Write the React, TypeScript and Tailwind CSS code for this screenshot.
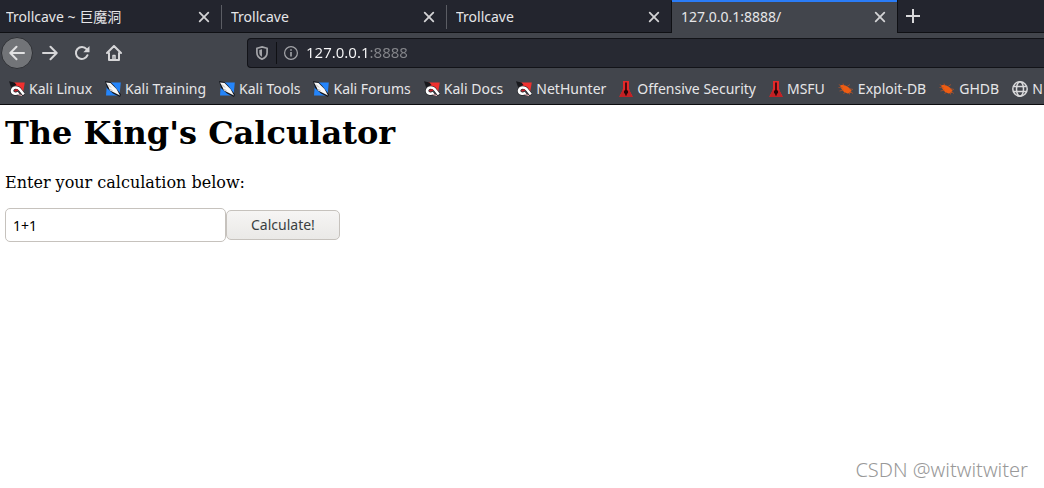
import React, { useState } from 'react';

type BookmarkIcon = 'magnet' | 'dragon' | 'tower' | 'bug' | 'globe';

const tabs = ['Trollcave ~ 巨魔洞', 'Trollcave', 'Trollcave', '127.0.0.1:8888/'];

const tabStyles = [
  'w-[222px] border-b border-[#0f1014] pt-px pl-[6px]',
  'w-[225px] border-b border-[#0f1014] pt-px pl-[9px]',
  'w-[225px] border-b border-[#0f1014] pt-px pl-[9px]',
  'w-[225px] border-t-2 border-[#2a7cf7] bg-[#42454c] pb-px pl-[9px]',
];

const bookmarks: { label: string; icon: BookmarkIcon }[] = [
  { label: 'Kali Linux', icon: 'magnet' },
  { label: 'Kali Training', icon: 'dragon' },
  { label: 'Kali Tools', icon: 'dragon' },
  { label: 'Kali Forums', icon: 'dragon' },
  { label: 'Kali Docs', icon: 'magnet' },
  { label: 'NetHunter', icon: 'magnet' },
  { label: 'Offensive Security', icon: 'tower' },
  { label: 'MSFU', icon: 'tower' },
  { label: 'Exploit-DB', icon: 'bug' },
  { label: 'GHDB', icon: 'bug' },
  { label: 'N', icon: 'globe' },
];

const MagnetIcon = () => (
  <svg className="size-4 shrink-0" viewBox="0 0 16 16">
    <path d="M3.500 1.500H15.800L14 11.500 9 8z" fill="#f0302f" />
    <path d="M0 .3L5.500 1.500 7.500 4 2 6z" fill="#17181c" />
    <path d="M15 14L11.500 9.500C9.500 5.500 4 5.500 3 9.300c-.2 3.600 4 4.300 6.500 2.400" fill="none" stroke="#17181c" strokeWidth="3.600" />
    <path d="M14.800 13.500L11.300 9C9 5.600 4 5.500 3 9.300c-.2 3.600 4 4.300 6.500 2.400" fill="none" stroke="#fff" strokeWidth="2.600" />
    <path d="M5.500 9.800L9 8.800" stroke="#c51f28" strokeWidth="1.800" />
    <path d="M9 13.500l4 1" stroke="#f3b7ba" strokeWidth="1" />
  </svg>
);

const DragonIcon = () => (
  <svg className="size-4 shrink-0" viewBox="0 0 16 16">
    <path d="M2 1.500H15.800L14.500 14.500H1z" fill="#2485fb" />
    <path d="M0 0L5.500 1 9 4.500 16 13.500 15 16 8 12.500 2 7z" fill="#15171d" />
    <path d="M1 1.500L5.500 2 8.500 5 11.500 8 15 14.500 9 11.500 5 9.500 3.500 6z" fill="#f8f8f8" />
    <path d="M3 3.500l3 3M5 8.500l2.500 1" stroke="#9da2aa" strokeWidth="0.800" />
  </svg>
);

const TowerIcon = () => (
  <svg className="w-[14px] h-4 shrink-0" viewBox="0 0 14 16">
    <path d="M4 0h6v7.500l1 3L13.500 15v1H.5v-1L3 10.500l1-3z" fill="#e3282a" />
    <path d="M3 10.500L7 8l4 2.500 2.500 5.500H.5z" fill="#c42024" />
    <path d="M6.200 1.500h1.600V9l1.200 1v2l-1.200 1v1.500H6.200V13L5 12v-2l1.200-1z" fill="#260608" />
  </svg>
);

const BugIcon = () => (
  <svg className="size-4 shrink-0" viewBox="0 0 16 16">
    <path d="M2 4.500L4.500 3.700 8 4.700 11.500 7 13.500 9.500 12.500 12 9.500 12.500 6 11 3.500 8z" fill="#ee5c12" />
    <path
      d="M.5 6.500l4 .3M1.500 10l4-1M5.500 13l1.500-2M11.500 13.500V11M12 10.500l3 2M11 7.500l4 1M9 5.500l3-2M6 4.500L5 2.500M3 5L.8 3.500"
      stroke="#a9502b"
      strokeWidth="0.800"
    />
  </svg>
);

const GlobeIcon = () => (
  <svg className="size-4 shrink-0" viewBox="0 0 16 16" fill="none" stroke="#d8d8da" strokeWidth="1.500">
    <circle cx="8" cy="8" r="7.200" />
    <ellipse cx="8" cy="8" rx="3.500" ry="7.200" />
    <path d="M1.500 5.500h13M1.500 10.500h13" />
  </svg>
);

const bookmarkIcons: Record<BookmarkIcon, React.FC> = {
  magnet: MagnetIcon,
  dragon: DragonIcon,
  tower: TowerIcon,
  bug: BugIcon,
  globe: GlobeIcon,
};

const CloseIcon = () => (
  <svg className="size-3" viewBox="0 0 12 12" fill="none" stroke="#d3d3d5" strokeWidth="1.800" strokeLinecap="round">
    <path d="M1.700 1.700l8.600 8.600M10.300 1.700l-8.600 8.600" />
  </svg>
);

const TabStrip: React.FC = () => (
  <div className="flex h-[33px] bg-[#23252e]">
    {tabs.map((title, i) => (
      <div key={i} className={`flex shrink-0 items-center ${tabStyles[i]}`}>
        <button className="grow truncate text-left">{title}</button>
        <button aria-label="Close tab" className="pr-[11px]">
          <CloseIcon />
        </button>
        {i < 2 && <span className="h-6 w-px bg-[#5b5d64]" />}
        {i === 2 && <span className="h-full w-px bg-[#0f1014]" />}
      </div>
    ))}
    <div className="flex grow items-center border-b border-l border-[#0f1014] pl-2">
      <button aria-label="New tab">
        <svg className="size-[14px]" viewBox="0 0 14 14" stroke="#d8d8da" strokeWidth="2">
          <path d="M7 0v14M0 7h14" />
        </svg>
      </button>
    </div>
  </div>
);

const NavBar: React.FC = () => (
  <div className="flex h-10 items-center bg-[#42454c]">
    <button
      aria-label="Back"
      className="ml-px flex size-8 shrink-0 items-center justify-center rounded-full border border-[#2f3136] bg-[#727478]"
    >
      <svg className="size-4" viewBox="0 0 16 16" fill="none" stroke="#e2e2e3" strokeWidth="2" strokeLinecap="round" strokeLinejoin="round">
        <path d="M15 8H1.500M7.500 1.800L1.300 8l6.200 6.200" />
      </svg>
    </button>
    <div className="flex w-[214px] shrink-0 gap-4 pl-[9px]">
      <button aria-label="Forward">
        <svg className="size-4" viewBox="0 0 16 16" fill="none" stroke="#d6d6d8" strokeWidth="2" strokeLinecap="round" strokeLinejoin="round">
          <path d="M1 8h13.500M8.500 1.800L14.700 8l-6.200 6.200" />
        </svg>
      </button>
      <button aria-label="Reload">
        <svg className="size-4" viewBox="0 0 16 16" fill="none" stroke="#d6d6d8" strokeWidth="2" strokeLinecap="round">
          <path d="M13.500 10.200A6 6 0 1 1 12.600 4.200" />
          <path d="M15.500 1v6.200H9.300z" fill="#d6d6d8" stroke="none" />
        </svg>
      </button>
      <button aria-label="Home">
        <svg className="size-4" viewBox="0 0 16 16" fill="none" stroke="#d6d6d8" strokeWidth="2" strokeLinecap="round" strokeLinejoin="round">
          <path d="M1 8l7-7 7 7M3 8v7h10V8" />
          <path d="M7 15v-4.500h2V15" strokeWidth="1.500" />
        </svg>
      </button>
    </div>
    <div className="flex h-[30px] grow items-center rounded-l border border-r-0 border-[#121318] bg-[#272932]">
      <button aria-label="Tracking protection" className="px-2">
        <svg className="w-3 h-[14px]" viewBox="0 0 12 14">
          <path d="M6 .9L11.100 2.300V6.500C11.100 10 8.700 12.200 6 13.100 3.300 12.200.9 10 .9 6.500V2.300z" fill="none" stroke="#a4a5a9" strokeWidth="1.700" />
          <path d="M6 3.300v7.400C4 9.700 3.300 8.400 3.300 6.500V4z" fill="#a4a5a9" />
        </svg>
      </button>
      <span className="h-[22px] w-px bg-[#0f1014]" />
      <button aria-label="Site information" className="pr-2 pl-[7px]">
        <svg className="size-[14px]" viewBox="0 0 14 14" fill="none" stroke="#a4a5a9">
          <circle cx="7" cy="7" r="6.400" strokeWidth="1.200" />
          <path d="M7 6v4.500M7 3.200v1.600" strokeWidth="1.600" />
        </svg>
      </button>
      {/* host is bright, port is dimmed */}
      <input
        aria-label="Address"
        defaultValue="127.0.0.1:8888"
        className="min-w-0 grow bg-linear-to-r from-[#f9f9fa] from-[63px] to-[#85868b] to-[63px] bg-clip-text text-[15px] text-transparent caret-white outline-none"
      />
    </div>
  </div>
);

const BookmarksBar: React.FC = () => (
  <nav className="flex h-8 items-center gap-[13px] overflow-hidden border-b border-[#0c0c0f] bg-[#42454c] pl-[9px]">
    {bookmarks.map(({ label, icon }) => {
      const Icon = bookmarkIcons[icon];
      return (
        <a key={label} href="#" className="flex shrink-0 items-center gap-1">
          <Icon />
          {label}
        </a>
      );
    })}
  </nav>
);

const Calculator: React.FC = () => {
  const [expression, setExpression] = useState('1+1');

  return (
    <main className="grow px-[5px] pt-[9px] font-['DejaVu_Serif',serif] text-black">
      <h1 className="text-[32px] leading-[38px] font-bold">The King's Calculator</h1>
      <p className="mt-5 text-base leading-[22px]">Enter your calculation below:</p>
      <form
        className="mt-[14px] flex items-center font-['Noto_Sans',sans-serif] text-sm"
        onSubmit={(e) => e.preventDefault()}
      >
        <input
          aria-label="Calculation"
          value={expression}
          onChange={(e) => setExpression(e.target.value)}
          className="h-[34px] w-[221px] rounded-[5px] border border-[#c6c2bd] bg-white px-[7px] outline-none"
        />
        <button
          type="submit"
          className="h-[30px] rounded-[5px] border border-[#c6c2bd] bg-linear-to-b from-[#f6f5f4] to-[#eae9e7] px-6 text-[#3a3f41]"
        >
          Calculate!
        </button>
      </form>
    </main>
  );
};

const App: React.FC = () => {
  return (
    <div className="flex min-h-screen flex-col overflow-hidden bg-white font-['Noto_Sans','Noto_Sans_CJK_SC',sans-serif] text-sm text-[#e6e6e8]">
      <TabStrip />
      <NavBar />
      <BookmarksBar />
      <Calculator />
      <footer className="px-4 pb-1 text-right font-['Noto_Sans',sans-serif] text-xl font-light text-[#999999]">
        CSDN @witwitwiter
      </footer>
    </div>
  );
};

export default App;
